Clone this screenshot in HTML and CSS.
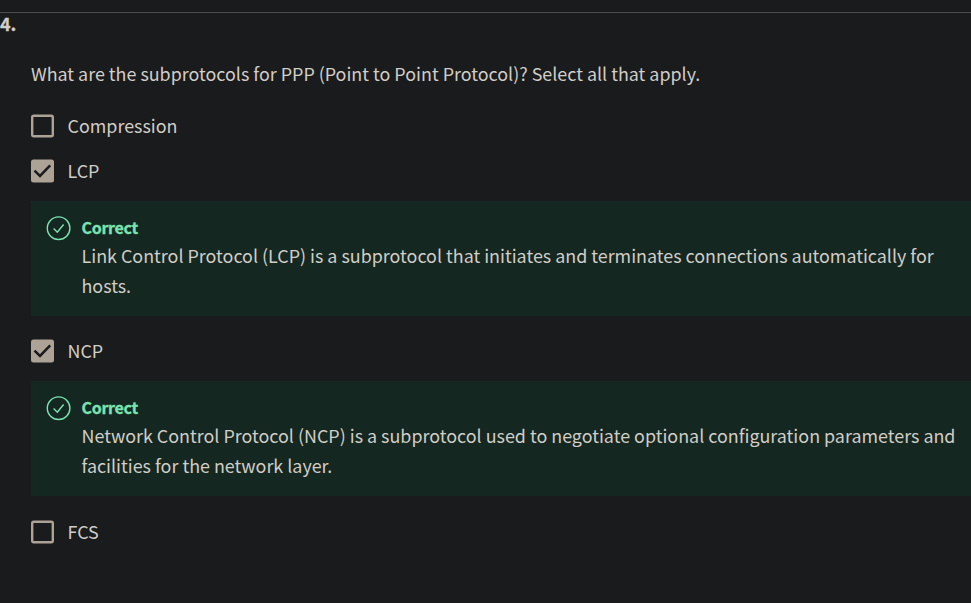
FILE: index.html
```html
<!DOCTYPE html>
<html lang="en">
<head>
<meta charset="utf-8">
<title>Quiz question</title>
<link rel="stylesheet" href="styles.css">
</head>
<body>
<main class="question">
  <h2 class="number">4.</h2>
  <div class="content">
    <p class="prompt">What are the subprotocols for PPP (Point to Point Protocol)? Select all that apply.</p>
    <div class="option">
      <svg class="box" viewBox="0 0 24 24"><rect class="frame" x="1.2" y="1.7" width="20.6" height="20.6" rx="1.5"/></svg><span class="label">Compression</span>
    </div>
    <div class="option second">
      <svg class="box" viewBox="0 0 24 24"><rect class="fill" y=".5" width="23" height="23" rx="2.5"/><path class="tick" d="M3.5 11.6 9 16.9 19.2 6.4"/></svg><span class="label">LCP</span>
    </div>
    <section class="feedback">
      <svg class="status" viewBox="0 0 24 24"><circle cx="11.6" cy="12.2" r="11.3"/><path d="M6.6 12.5 10.3 16.2 16.6 8.5"/></svg>
      <div>
        <h3 class="verdict">Correct</h3>
        <p class="detail">Link Control Protocol (LCP) is a subprotocol that initiates and terminates connections automatically for hosts.</p>
      </div>
    </section>
    <div class="option third">
      <svg class="box" viewBox="0 0 24 24"><rect class="fill" y=".5" width="23" height="23" rx="2.5"/><path class="tick" d="M3.5 11.6 9 16.9 19.2 6.4"/></svg><span class="label">NCP</span>
    </div>
    <section class="feedback">
      <svg class="status" viewBox="0 0 24 24"><circle cx="11.6" cy="12.2" r="11.3"/><path d="M6.6 12.5 10.3 16.2 16.6 8.5"/></svg>
      <div>
        <h3 class="verdict">Correct</h3>
        <p class="detail">Network Control Protocol (NCP) is a subprotocol used to negotiate optional configuration parameters and facilities for the network layer.</p>
      </div>
    </section>
    <div class="option fourth">
      <svg class="box" viewBox="0 0 24 24"><rect class="frame" x="1.2" y="1.7" width="20.6" height="20.6" rx="1.5"/></svg><span class="label">FCS</span>
    </div>
  </div>
</main>
</body>
</html>
```

FILE: styles.css
```css
* { box-sizing: border-box; }
body {
  margin: 0;
  height: 603px;
  overflow: hidden;
  background: #1a1b1d;
  color: #d1cdc7;
  font-family: "Noto Sans CJK SC", "Noto Sans", sans-serif;
  font-size: 17.9px;
  line-height: 30px;
}
h2, h3, p { margin: 0; }
.question {
  margin-top: 12px;
  border-top: 1px solid #494b4c;
}
.number {
  height: 21px;
  font-size: 18px;
  line-height: 20px;
  font-weight: 700;
  -webkit-text-stroke: .3px currentColor;
}
.content { padding: 24px 0 0 31px; }
.prompt { height: 30px; white-space: nowrap; }
.option {
  display: flex;
  align-items: center;
  gap: 12.5px;
  height: 30px;
  margin-top: 22px;
}
.second { margin-top: 15px; }
.box {
  flex: none;
  width: 24px;
  height: 24px;
  margin-top: 2px;
}
.frame {
  fill: none;
  stroke: #aca295;
  stroke-width: 2.4;
}
.fill { fill: #aca295; }
.tick {
  fill: none;
  stroke: #1a1b1d;
  stroke-width: 2.5;
}
.feedback {
  display: flex;
  gap: 11px;
  height: 115px;
  margin-top: 16px;
  margin-bottom: -1px;
  padding: 15px 12px 0 15.5px;
  background: #152721;
}
.feedback + .option { margin-top: 20px; }
.feedback + .fourth { margin-top: 21px; }
.status {
  flex: none;
  width: 24px;
  height: 24px;
  overflow: visible;
  fill: none;
  stroke: #79e4b2;
  stroke-width: 1.4;
}
.verdict {
  height: 25px;
  margin-top: -1px;
  color: #79e4b2;
  font-size: 16px;
  line-height: 24px;
  font-weight: 700;
  letter-spacing: -.3px;
  -webkit-text-stroke: .3px currentColor;
}
```
